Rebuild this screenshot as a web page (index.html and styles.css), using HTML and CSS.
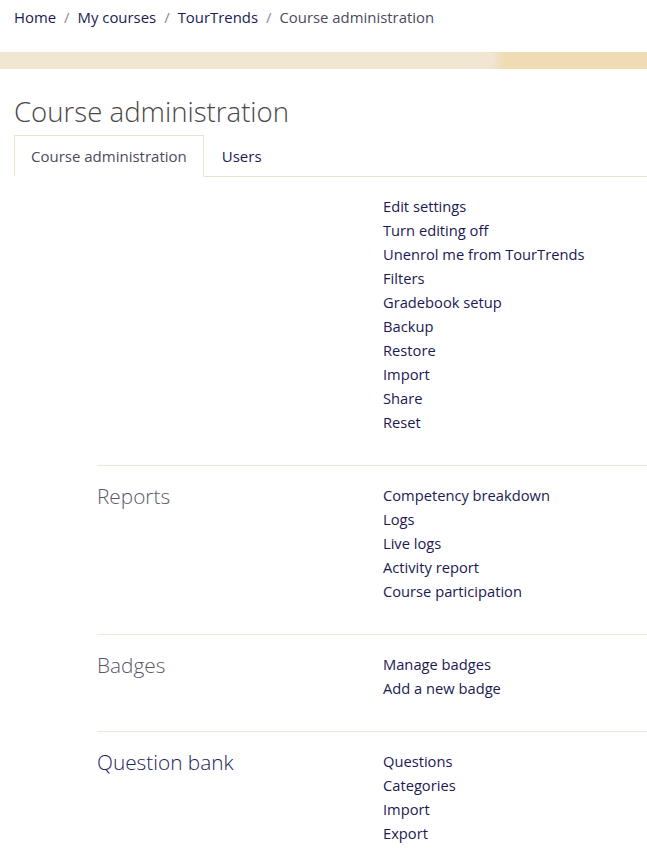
FILE: index.html
```html
<!DOCTYPE html>
<html>
<head>
<meta charset="utf-8">
<link rel="stylesheet" href="styles.css">
</head>
<body>
<nav class="crumbs">
  <a href="#" class="crumb">Home</a><span class="sep">/</span>
  <a href="#" class="crumb">My courses</a><span class="sep">/</span>
  <a href="#" class="crumb">TourTrends</a><span class="sep">/</span>
  <span class="crumb current">Course administration</span>
</nav>
<div class="band"></div>
<main class="main">
  <h2 class="title">Course administration</h2>
  <div class="tabs">
    <div class="tab active">Course administration</div>
    <div class="tab">Users</div>
    <div class="tab-fill"></div>
  </div>
  <section class="group first">
    <div class="group-head"></div>
    <ul class="links">
      <li><a href="#">Edit settings</a></li>
      <li><a href="#">Turn editing off</a></li>
      <li><a href="#">Unenrol me from TourTrends</a></li>
      <li><a href="#">Filters</a></li>
      <li><a href="#">Gradebook setup</a></li>
      <li><a href="#">Backup</a></li>
      <li><a href="#">Restore</a></li>
      <li><a href="#">Import</a></li>
      <li><a href="#">Share</a></li>
      <li><a href="#">Reset</a></li>
    </ul>
  </section>
  <section class="group">
    <h3 class="group-head">Reports</h3>
    <ul class="links">
      <li><a href="#">Competency breakdown</a></li>
      <li><a href="#">Logs</a></li>
      <li><a href="#">Live logs</a></li>
      <li><a href="#">Activity report</a></li>
      <li><a href="#">Course participation</a></li>
    </ul>
  </section>
  <section class="group">
    <h3 class="group-head">Badges</h3>
    <ul class="links">
      <li><a href="#">Manage badges</a></li>
      <li><a href="#">Add a new badge</a></li>
    </ul>
  </section>
  <section class="group">
    <h3 class="group-head link-head">Question bank</h3>
    <ul class="links">
      <li><a href="#">Questions</a></li>
      <li><a href="#">Categories</a></li>
      <li><a href="#">Import</a></li>
      <li><a href="#">Export</a></li>
    </ul>
  </section>
</main>
</body>
</html>
```
FILE: styles.css
```css
html, body {
  margin: 0;
  padding: 0;
  background: #ffffff;
}
body {
  font-family: "Open Sans", "Noto Sans", sans-serif;
  font-size: 14.7px;
  color: #1b1a52;
  overflow: hidden;
  width: 647px;
}
a {
  color: #1b1a52;
  text-decoration: none;
}
.crumbs {
  display: flex;
  align-items: center;
  padding: 5px 14px 0 14px;
  height: 24px;
  font-size: 14.9px;
}
.crumb.current {
  color: #4d4a5e;
}
.sep {
  color: #8a8790;
  margin: 0 8px;
}
.band {
  margin-top: 23px;
  height: 17px;
  background: linear-gradient(90deg, #f1e6d2 0%, #f1e6d2 76%, #efdbb4 78%, #efdbb4 100%);
}
.main {
  padding: 0 0 0 14px;
}
.title {
  margin: 22px 0 0 0;
  font-weight: 300;
  font-size: 27.6px;
  line-height: 40px;
  color: #4a4747;
}
.tabs {
  display: flex;
  margin-top: 4px;
  height: 42px;
}
.tab {
  padding: 0 16px;
  display: flex;
  align-items: center;
  font-size: 15px;
  border-bottom: 1px solid #efe3cf;
  box-sizing: border-box;
}
.tab.active {
  border: 1px solid #efe3cf;
  border-bottom-color: transparent;
  color: #4d4a5e;
}
.tab + .tab {
  padding: 0 18px;
}
.tab-fill {
  flex: 1;
  border-bottom: 1px solid #efe3cf;
}
.group {
  display: grid;
  grid-template-columns: 286px 1fr;
  margin-left: 83px;
  padding: 17px 0 31px 0;
  border-top: 1px solid #efe6d8;
}
.group.first {
  border-top: none;
}
.group-head {
  margin: 0;
  font-size: 20.8px;
  font-weight: 300;
  color: #5b5766;
  line-height: 26px;
}
.link-head {
  color: #23225a;
}
.links {
  list-style: none;
  margin: 0;
  padding: 0;
}
.links li {
  line-height: 24px;
  height: 24px;
}
```
